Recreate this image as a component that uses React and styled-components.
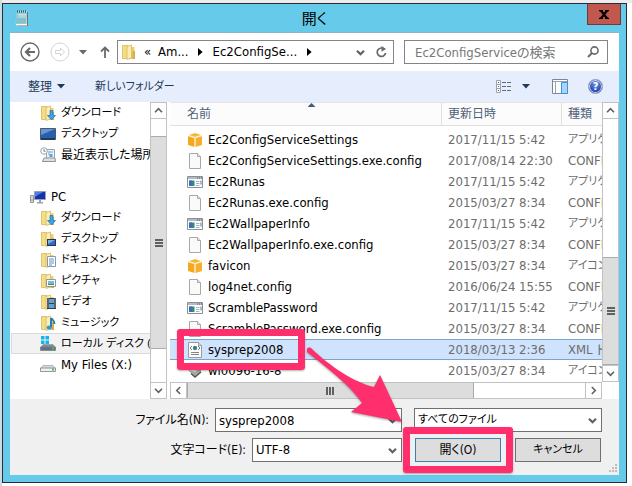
import React, { useState } from 'react';
import styled, { createGlobalStyle, css } from 'styled-components';

const GlobalStyle = createGlobalStyle`
  * {
    box-sizing: border-box;
  }

  body {
    margin: 0;
    padding: 3px 5px 3px 2px;
    background: linear-gradient(90deg, #cddce2 0 2px, transparent 2px),
      linear-gradient(#ededee 0 3px, #ffffff 3px);
    font-family: 'DejaVu Sans Condensed', 'Noto Sans', 'Noto Sans CJK JP', sans-serif;
    font-size: 13px;
    line-height: 20px;
    font-feature-settings: 'palt';
    color: #000000;
  }

  svg {
    flex: none;
  }

  button,
  input,
  select {
    font: inherit;
    font-feature-settings: inherit;
    color: inherit;
    margin: 0;
    padding: 0;
    border: none;
    border-radius: 0;
    background: none;
    outline: none;
  }
`;

// Window frame
const DialogWindow = styled.main`
  display: flex;
  flex-direction: column;
  padding: 0 7px 7px;
  border: 1px solid #2b2b33;
  background: #66cbea;
`;

const TitleBar = styled.header`
  display: grid;
  grid-template-columns: 34px 1fr 34px;
  height: 29px;
  border-bottom: 1px solid #8fb3bf;

  > svg {
    margin: 6px 0 0 4px;
  }
`;

const Title = styled.h1`
  margin: 0;
  font-size: 15px;
  font-weight: 400;
  line-height: 30px;
  text-align: center;
`;

const CloseButton = styled.button`
  display: flex;
  align-items: center;
  justify-content: center;
  height: 21px;
  margin-right: -2px;
  margin-left: 2px;
  border: 1px solid #6b3a3a;
  border-top: none;
  background: #c1584e;
`;

// Navigation row
const NavBar = styled.nav`
  display: flex;
  align-items: center;
  height: 38px;
  padding: 0 11px 0 10px;
  background: #ffffff;
`;

const NavButton = styled.button`
  display: flex;
  align-items: center;
  justify-content: center;
  width: ${(props) => props.$width}px;
  height: 24px;
  margin-left: ${(props) => props.$before || 0}px;
`;

const AddressBar = styled.div`
  display: flex;
  flex: 270 1 0;
  align-items: center;
  min-width: 0;
  height: 24px;
  margin-left: 2px;
  padding: 0 2px 0 3px;
  border: 1px solid #848484;
`;

const Crumb = styled.button`
  height: 22px;
  line-height: 20px;
  white-space: nowrap;
`;

const CrumbMark = styled.span`
  display: flex;
  justify-content: center;
  width: ${(props) => props.$width}px;
`;

const Spacer = styled.span`
  flex: 1;
`;

const SearchBox = styled.label`
  display: flex;
  flex: 184 1 0;
  align-items: center;
  min-width: 0;
  height: 24px;
  margin-left: 10px;
  padding: 0 8px 0 10px;
  border: 1px solid #848484;
`;

const SearchInput = styled.input`
  flex: 1;
  min-width: 0;
  height: 22px;

  &::placeholder {
    color: #767676;
    opacity: 1;
  }
`;

// Command row
const CommandBar = styled.div`
  display: flex;
  align-items: center;
  height: 31px;
  padding: 0 16px 0 18px;
  background: #e6eefd;
  color: #1e395b;
  font-size: 12px;
`;

const CommandButton = styled.button`
  display: flex;
  align-items: center;
  gap: 5px;
  margin-right: ${(props) => props.$after || 0}px;
  font-size: ${(props) => (props.$kana ? 11 : 12)}px;
  white-space: nowrap;
`;

const HelpBadge = styled.span`
  width: 15px;
  height: 15px;
  border: 1px solid #8d97ad;
  border-radius: 50%;
  background: radial-gradient(circle at 50% 30%, #6f95e8, #1a3fae 75%);
  box-shadow: inset 0 0 0 1px #c9d4ee;
  color: #ffffff;
  font-size: 11px;
  font-weight: 700;
  line-height: 13px;
  text-align: center;
`;

// Panes
const Panes = styled.div`
  display: grid;
  grid-template-columns: 157px minmax(0, 1fr);
  column-gap: 3px;
  background: #ffffff;
`;

const Sidebar = styled.aside`
  display: grid;
  grid-template-columns: 1fr 17px;
  height: 0;
  min-height: 100%;
`;

const Tree = styled.ul`
  min-height: 0;
  margin: 0;
  padding: 0;
  overflow: hidden;
  list-style: none;
`;

const TreeItem = styled.li`
  height: 21px;
  padding-left: 1px;
`;

const TreeButton = styled.button`
  display: flex;
  align-items: center;
  gap: 5px;
  width: 100%;
  height: 21px;
  padding-left: ${(props) => (props.$root ? 18 : 28)}px;
  border: 1px solid transparent;
  border-right: none;
  font-size: ${(props) => props.$size || 13}px;
  white-space: nowrap;

  ${(props) =>
    props.$active &&
    css`
      border-color: #dadada;
      background: #f2f2f2;
    `}
`;

const FilePane = styled.section`
  display: grid;
  grid-template-columns: minmax(0, 1fr) 17px;
  grid-template-rows: 1fr 17px;
`;

const TableWrap = styled.div`
  min-width: 0;
  padding-bottom: 1px;
  overflow: hidden;
`;

const FileTable = styled.table`
  width: 100%;
  table-layout: fixed;
  border-collapse: separate;
  border-spacing: 0;
`;

const HeadCell = styled.th`
  position: relative;
  height: 24px;
  padding: 0 0 0 ${(props) => props.$pad}px;
  border-top: 1px solid #e4e4e4;
  border-right: 1px solid #e0e0e0;
  border-bottom: 1px solid #e0e0e0;
  background: #fcfcfc;
  color: #4c607a;
  font-size: 12px;
  font-weight: 400;
  text-align: left;
  white-space: nowrap;
  overflow: hidden;

  &:last-child {
    border-right: none;
  }
`;

const SortMark = styled.span`
  position: absolute;
  top: 0;
  left: 12px;
  right: 0;
  margin: 0 auto;
  width: 8px;
  height: 4px;
  background: #44597a;
  clip-path: polygon(50% 0, 100% 100%, 0 100%);
`;

const HeadGap = styled.tr`
  height: 3px;
`;

const Cell = styled.td`
  height: 21px;
  padding: 0 0 0 ${(props) => props.$pad}px;
  border: 0 solid #7da2ce;
  border-width: ${(props) => (props.$selected ? '1px 0' : '0')};
  background: ${(props) => (props.$selected ? '#cfe3fd' : 'transparent')};
  color: #6d6d6d;
  font-size: ${(props) => (props.$kana ? 11 : 13)}px;
  line-height: 19px;
  white-space: nowrap;
  overflow: ${(props) => (props.$name ? 'visible' : 'hidden')};
`;

const FileName = styled.span`
  position: relative;
  display: flex;
  align-items: center;
  gap: 5px;
  width: max-content;
  height: 19px;
  color: #000000;
`;

const marker = css`
  position: absolute;
  z-index: 2;
  border: 7px solid #ff2f6d;
  border-radius: 3px;
  box-shadow: 0 1px 2px rgba(0, 0, 0, 0.3);
  pointer-events: none;
`;

const NameMarker = styled.span`
  ${marker}
  top: -11px;
  right: -22px;
  bottom: -11px;
  left: -10px;
`;

// Scroll bars
const ScrollBar = styled.div`
  display: flex;
  flex-direction: ${(props) => (props.$horizontal ? 'row' : 'column')};
  min-width: 0;
  min-height: 0;
  border: 1px solid #c2c2c2;
  border-width: ${(props) => (props.$horizontal ? '1px 0' : '0 1px')};
  background: #ffffff;
`;

const ScrollButton = styled.button`
  display: flex;
  flex: none;
  align-items: center;
  justify-content: center;
  width: ${(props) => (props.$horizontal ? '17px' : 'auto')};
  height: ${(props) => (props.$horizontal ? 'auto' : '17px')};
  border: 1px solid #c2c2c2;
  border-width: ${(props) => (props.$horizontal ? '0 1px' : '1px 0')};
`;

const ScrollSpace = styled.div`
  flex: ${(props) => props.$size} 1 0;
`;

const ScrollThumb = styled.div`
  display: flex;
  flex: ${(props) => props.$size} 1 0;
  align-items: center;
  justify-content: center;
  border: 1px solid #ababab;
  border-width: ${(props) => (props.$horizontal ? '0 1px' : '1px 0')};
  background: #dddddd;
`;

const ThumbGrip = styled.span`
  width: 8px;
  height: 8px;
  background: repeating-linear-gradient(
    ${(props) => (props.$horizontal ? '90deg' : '180deg')},
    #606060 0 2px,
    transparent 2px 3px
  );
`;

// Bottom area
const Footer = styled.form`
  position: relative;
  display: grid;
  grid-template-columns: minmax(0, 1fr) 188px;
  grid-auto-rows: 24px;
  gap: 6px 12px;
  padding: 9px 17px 13px 10px;
  background: #f0f0f0;
`;

const Field = styled.div`
  display: flex;
  align-items: center;
  justify-content: flex-end;
  gap: 6px;
  min-width: 0;
  font-size: 12px;

  label {
    white-space: nowrap;
  }
`;

const ControlBox = styled.div`
  display: flex;
  align-items: center;
  position: relative;
  flex: 0 1 ${(props) => props.$width}px;
  min-width: 0;
  height: 24px;
  border: 1px solid #707070;
  background: #ffffff;
  font-size: ${(props) => (props.$kana ? 11 : 13)}px;

  input,
  select {
    flex: 1;
    min-width: 0;
    height: 22px;
    padding: 0 20px 0 3px;
    appearance: none;
  }

  svg {
    position: absolute;
    right: 4px;
    pointer-events: none;
  }
`;

const Actions = styled.div`
  display: grid;
  grid-template-columns: 1fr 1fr;
  gap: 14px;
  padding: 0 1px;
`;

const ActionSlot = styled.div`
  position: relative;
  display: grid;
`;

const ActionButton = styled.button`
  border: 1px solid ${(props) => (props.$primary ? '#3c7fb1' : '#707070')};
  background: #dddddd;
  font-size: ${(props) => (props.$kana ? 11 : 12)}px;
  line-height: 22px;
`;

const ButtonMarker = styled.span`
  ${marker}
  inset: -11px -12px;
`;

const PointerArrow = styled.svg`
  position: absolute;
  z-index: 2;
  right: 98px;
  bottom: 38px;
  filter: drop-shadow(0 1px 1px rgba(0, 0, 0, 0.35));
  pointer-events: none;
`;

const ResizeGrip = styled.svg`
  position: absolute;
  right: 2px;
  bottom: 2px;
`;

const Chevron = ({ dir = 'down', bold }) => {
  const turn = { down: 0, left: 90, up: 180, right: 270 }[dir];
  return (
    <svg width="9" height="9" viewBox="0 0 9 9" aria-hidden="true">
      <path
        d="M1 2.8 4.5 6.3 8 2.8"
        fill="none"
        stroke="#606060"
        strokeWidth={bold ? 2.2 : 1.6}
        transform={`rotate(${turn} 4.5 4.5)`}
      />
    </svg>
  );
};

const Triangle = ({ color = '#1e395b' }) => (
  <svg width="8" height="5" viewBox="0 0 8 5" aria-hidden="true">
    <path d="M0 0h8L4 4.6z" fill={color} />
  </svg>
);

const CrumbArrow = () => (
  <svg width="5" height="8" viewBox="0 0 5 8" aria-hidden="true">
    <path d="M0 0v8l4.6-4z" fill="#000000" />
  </svg>
);

const CircleArrow = ({ muted, flip }) => (
  <svg width="20" height="20" viewBox="0 0 20 20" aria-hidden="true">
    <g
      fill="none"
      stroke={muted ? '#d4d4d4' : '#6a6a6a'}
      transform={flip ? 'translate(20 0) scale(-1 1)' : undefined}
    >
      <circle cx="10" cy="10" r="9" strokeWidth={muted ? 1 : 1.4} />
      {muted ? (
        <path d="M5.5 10 9.5 6v2.5h5v3h-5V14z" />
      ) : (
        <path d="M15 10H6.5M10 6 6 10l4 4" strokeWidth="2.2" />
      )}
    </g>
  </svg>
);

const NotepadIcon = () => (
  <svg width="16" height="17" viewBox="0 0 16 17" aria-hidden="true">
    <path d="M4 2h10v14H3z" fill="#7d7259" />
    <path d="M3 1.5h10v14H2z" fill="#f5fafa" />
    <path d="M3 2h10l-.5 12H1z" fill="#8fcbd6" />
    <path d="M4 4h8v4H3.5z" fill="#c6e8ee" />
    <path d="M3 6h9M2.5 8h9.5M2.5 10h9.5M2 12h10" stroke="#62aebd" strokeWidth=".6" />
    <path d="M3 1.5h10" stroke="#3e4c50" strokeWidth="2" strokeDasharray="1 1" />
  </svg>
);

const badges = {
  download: <path d="M10 5.5h3v5h2.5L11.5 15 7.5 10.5H10z" fill="#39a5e8" stroke="#1c70b8" strokeWidth=".7" />,
  desktop: (
    <>
      <rect x="7.5" y="8.5" width="8" height="6" fill="#2e6cc0" stroke="#27374e" />
      <path d="M8 9h7l-7 4z" fill="#7db0e8" />
    </>
  ),
  document: (
    <>
      <path d="M7.5 4.5h8v10h-8z" fill="#ffffff" stroke="#8a97a8" />
      <path d="M9 7h5M9 9h5M9 11h5M9 13h3" stroke="#5a93cc" />
    </>
  ),
  picture: (
    <>
      <path d="M6.5 6.5h9v7h-9z" fill="#ffffff" stroke="#8a97a8" />
      <path d="M8 8h6v2.5H8z" fill="#74bce8" />
      <path d="M8 10.5h6V12H8z" fill="#4c8f62" />
    </>
  ),
  video: (
    <>
      <path d="M7 4h9v11H7z" fill="#333a42" />
      <path d="M9 5h5v4H9zM9 10h5v4H9z" fill="#62a2d5" />
      <path d="M8 4.5v10M15 4.5v10" stroke="#e4e4e4" strokeDasharray="1 1" />
    </>
  ),
  music: (
    <>
      <path d="M11 3v9M11 3c1 2 4 2 3.5 6" fill="none" stroke="#1976c4" strokeWidth="1.8" />
      <ellipse cx="9.2" cy="12.5" rx="2.6" ry="2" fill="#2a94e4" />
    </>
  ),
};

const FolderIcon = ({ badge }) => (
  <svg width="16" height="16" viewBox="0 0 16 16" aria-hidden="true">
    <path d="M7 3h6.5v12H7z" fill="#ecd06f" />
    <path d="M11.5 7H14v8h-2.5z" fill="#d7ae48" />
    <path d="M1.5 1.5H7v13H1.5z" fill="#f6dd85" stroke="#d9b85a" strokeWidth=".8" />
    <path d="M6 2.5 10.5 1v13L6 15.5z" fill="#fbeeb4" stroke="#d9b85a" strokeWidth=".8" />
    {badges[badge]}
  </svg>
);

const DesktopIcon = () => (
  <svg width="16" height="16" viewBox="0 0 16 16" aria-hidden="true">
    <path d="M.5 2.5h15v11H.5z" fill="#2860ad" stroke="#4a5a70" />
    <path d="M1 3h14L1 9z" fill="#6795d4" />
    <path d="M1 12h14v2H1z" fill="#26384f" />
  </svg>
);

const RecentIcon = () => (
  <svg width="16" height="16" viewBox="0 0 16 16" aria-hidden="true">
    <path d="M6.5 2.5h8v9h-8z" fill="#eef3f7" stroke="#98a0a8" />
    <path d="M8 5h5M8 7h2" stroke="#6aa0ce" />
    <path d="M9.5 7h3v3h-3z" fill="#5aa2d0" />
    <path d="M2.5 14.5 4 11h11l.5 3.5z" fill="#dde1e4" stroke="#8f9499" />
    <circle cx="4" cy="4" r="3.3" fill="#ffffff" stroke="#9ba5ae" />
    <path d="M4 2v2.3h1.5" fill="none" stroke="#566270" strokeWidth=".8" />
  </svg>
);

const ComputerIcon = () => (
  <svg width="16" height="16" viewBox="0 0 16 16" aria-hidden="true">
    <path d="M.5 6.5h3v7h-3z" fill="#d3d7db" stroke="#8f969d" />
    <path d="M1.5 11h1" stroke="#3faf3f" />
    <path d="M4.5 2.5h11v8h-11z" fill="#1730b0" stroke="#9aa2ab" />
    <path d="M5 3h8L5 8z" fill="#4f7de6" />
    <path d="M9 11h2v2H9zM7 13h6v1.5H7z" fill="#9aa2ab" />
  </svg>
);

const DriveIcon = ({ system }) => (
  <svg width="16" height="16" viewBox="0 0 16 16" aria-hidden="true">
    {system && (
      <path d="M1 0h3.5v3.5H1zM5.5 0H9v3.5H5.5zM1 4.5h3.5V8H1zM5.5 4.5H9V8H5.5z" fill="#14b4ec" />
    )}
    <path
      d="M3 8.5h10l2.5 3H.5z"
      fill={system ? '#7f8c97' : '#d9dcdf'}
      stroke="#8b9299"
      strokeWidth=".6"
    />
    <path
      d="M.5 11h15v3.5H.5z"
      fill={system ? '#5f7282' : '#eef0f1'}
      stroke="#7a8188"
      strokeWidth=".8"
    />
    <path d="M12 11.5h2v2h-2z" fill="#3cc83c" />
  </svg>
);

const NetworkIcon = () => (
  <svg width="16" height="16" viewBox="0 0 16 16" aria-hidden="true">
    <circle cx="7" cy="8" r="7" fill="#4a8fd0" />
    <path d="M2 6c3-4 6-1 9-3M3 11c3-2 6 2 9-1" fill="none" stroke="#8fd08f" />
  </svg>
);

const BoxIcon = () => (
  <svg width="16" height="16" viewBox="0 0 16 16" aria-hidden="true">
    <path d="M2 3 8 1l6 2-6 2z" fill="#f7b733" />
    <path d="M1 4l6.5 2v9L1 13z" fill="#f3a81d" />
    <path d="M15 4 8.5 6v9l6.5-2z" fill="#f5af2b" />
    <path d="M1 3.7 8 5.8l7-2.1M8 5.8V15" fill="none" stroke="#fde7b5" strokeWidth=".8" />
  </svg>
);

const PageIcon = () => (
  <svg width="16" height="16" viewBox="0 0 16 16" aria-hidden="true">
    <path d="M2.5.5h8l3 3v12h-11z" fill="#fafafa" stroke="#a8a8a8" />
    <path d="M10.5.5v3h3" fill="#e6e6e6" stroke="#a8a8a8" />
  </svg>
);

const ProgramIcon = () => (
  <svg width="16" height="16" viewBox="0 0 16 16" aria-hidden="true">
    <path d="M.5 2.5h15v11H.5z" fill="#ffffff" stroke="#8a9098" />
    <path d="M1 3h14v2H1z" fill="#b4bac1" />
    <path d="M10 4h1M12 4h1M14 4h1" stroke="#4f565e" />
    <path d="M2 6.5h5.5V12H2z" fill="#35848a" />
    <path d="M2 6.5h3V12H2z" fill="#3f70ad" />
    <path d="M9 7.5h3.5M9 9.5h3.5M9 11.5h3.5" stroke="#aab3bc" />
    <path d="M14 6.5v4" stroke="#477da8" />
  </svg>
);

const XmlIcon = () => (
  <svg width="16" height="16" viewBox="0 0 16 16" aria-hidden="true">
    <path d="M1.5.5h10l3 3v12h-13z" fill="#fcfcfc" stroke="#9a9a9a" />
    <path d="M11.5.5v3h3" fill="#dddddd" stroke="#9a9a9a" />
    <path d="M5 4 3 6l2 2M11 4l2 2-2 2" fill="none" stroke="#6f7782" />
    <circle cx="8" cy="6" r="2.2" fill="#3c8f7c" />
    <path d="M7 5h1.5v1.5H7z" fill="#2c5fb0" />
    <path d="M4 10.5h8M4 12.5h8" stroke="#868686" />
  </svg>
);

const DiscIcon = () => (
  <svg width="16" height="16" viewBox="0 0 16 16" aria-hidden="true">
    <path d="M1 7 9 2l5 2v5l-6 5z" fill="#a8a8a8" />
    <path d="M1 7 9 2l5 2-6 5z" fill="#dcdcdc" />
    <path d="M4 10.5 8 14l6-5" fill="none" stroke="#555555" strokeWidth="1.5" />
  </svg>
);

const fileIcons = {
  box: BoxIcon,
  page: PageIcon,
  program: ProgramIcon,
  xml: XmlIcon,
  disc: DiscIcon,
};

const treeItems = [
  { label: 'ダウンロード', icon: <FolderIcon badge="download" />, size: 11 },
  { label: 'デスクトップ', icon: <DesktopIcon />, size: 11 },
  { label: '最近表示した場所', icon: <RecentIcon />, size: 12 },
  null,
  { label: 'PC', icon: <ComputerIcon />, root: true },
  { label: 'ダウンロード', icon: <FolderIcon badge="download" />, size: 11 },
  { label: 'デスクトップ', icon: <FolderIcon badge="desktop" />, size: 11 },
  { label: 'ドキュメント', icon: <FolderIcon badge="document" />, size: 11 },
  { label: 'ピクチャ', icon: <FolderIcon badge="picture" />, size: 11 },
  { label: 'ビデオ', icon: <FolderIcon badge="video" />, size: 11 },
  { label: 'ミュージック', icon: <FolderIcon badge="music" />, size: 11 },
  { label: 'ローカル ディスク (C:)', icon: <DriveIcon system />, size: 11, active: true },
  { label: 'My Files (X:)', icon: <DriveIcon /> },
  null,
  { label: 'ネットワーク', icon: <NetworkIcon />, root: true, size: 11 },
];

const files = [
  { name: 'Ec2ConfigServiceSettings', icon: 'box', date: '2017/11/15 5:42', type: 'アプリケーション' },
  { name: 'Ec2ConfigServiceSettings.exe.config', icon: 'page', date: '2017/08/14 22:30', type: 'CONFIG ファイル' },
  { name: 'Ec2Runas', icon: 'program', date: '2017/11/15 5:42', type: 'アプリケーション' },
  { name: 'Ec2Runas.exe.config', icon: 'page', date: '2015/03/27 8:34', type: 'CONFIG ファイル' },
  { name: 'Ec2WallpaperInfo', icon: 'program', date: '2017/11/15 5:42', type: 'アプリケーション' },
  { name: 'Ec2WallpaperInfo.exe.config', icon: 'page', date: '2015/03/27 8:34', type: 'CONFIG ファイル' },
  { name: 'favicon', icon: 'box', date: '2015/03/27 8:34', type: 'アイコン' },
  { name: 'log4net.config', icon: 'page', date: '2016/06/24 15:55', type: 'CONFIG ファイル' },
  { name: 'ScramblePassword', icon: 'program', date: '2017/11/15 5:42', type: 'アプリケーション' },
  { name: 'ScramblePassword.exe.config', icon: 'page', date: '2015/03/27 8:34', type: 'CONFIG ファイル' },
  { name: 'sysprep2008', icon: 'xml', date: '2018/03/13 2:36', type: 'XML ドキュメント' },
  { name: 'wl0096-16-8', icon: 'disc', date: '2015/03/27 8:34', type: 'アイコン' },
];

function Scroll({ horizontal, before, thumb, after }) {
  return (
    <ScrollBar $horizontal={horizontal}>
      <ScrollButton type="button" $horizontal={horizontal} aria-label="前へスクロール">
        <Chevron dir={horizontal ? 'left' : 'up'} />
      </ScrollButton>
      <ScrollSpace $size={before} />
      <ScrollThumb $size={thumb} $horizontal={horizontal}>
        <ThumbGrip $horizontal={horizontal} />
      </ScrollThumb>
      <ScrollSpace $size={after} />
      <ScrollButton type="button" $horizontal={horizontal} aria-label="次へスクロール">
        <Chevron dir={horizontal ? 'right' : 'down'} />
      </ScrollButton>
    </ScrollBar>
  );
}

function FileRow({ file, selected, onSelect }) {
  const Icon = fileIcons[file.icon];
  return (
    <tr onClick={onSelect} aria-selected={selected}>
      <Cell $name $pad={17} $selected={selected}>
        <FileName>
          <Icon />
          {file.name}
          {selected && <NameMarker />}
        </FileName>
      </Cell>
      <Cell $pad={6} $selected={selected}>{file.date}</Cell>
      <Cell $pad={6} $selected={selected} $kana={file.type.startsWith('ア')}>
        {file.type}
      </Cell>
    </tr>
  );
}

function App() {
  const [fileName, setFileName] = useState('sysprep2008');

  return (
    <>
      <GlobalStyle />
      <DialogWindow>
        <TitleBar>
          <NotepadIcon />
          <Title>開く</Title>
          <CloseButton type="button" aria-label="閉じる">
            <svg width="10" height="9" viewBox="0 0 10 9" aria-hidden="true">
              <path d="M1.5 0 8.5 9M8.5 0 1.5 9" stroke="#000000" strokeWidth="2.2" />
              <path d="M0 .6h4M6 .6h4M0 8.4h4M6 8.4h4" stroke="#000000" strokeWidth="1.2" />
            </svg>
          </CloseButton>
        </TitleBar>

        <NavBar>
          <NavButton type="button" $width={20} aria-label="戻る">
            <CircleArrow />
          </NavButton>
          <NavButton type="button" $width={20} $before={10} aria-label="進む">
            <CircleArrow muted flip />
          </NavButton>
          <NavButton type="button" $width={25} aria-label="履歴">
            <Triangle color="#6a6a6a" />
          </NavButton>
          <NavButton type="button" $width={20} aria-label="上へ">
            <svg width="10" height="12" viewBox="0 0 10 12" aria-hidden="true">
              <path d="M5 12V1.5M1 5.5l4-4 4 4" fill="none" stroke="#6a6a6a" strokeWidth="1.8" />
            </svg>
          </NavButton>
          <AddressBar>
            <FolderIcon />
            <CrumbMark $width={21}>«</CrumbMark>
            <Crumb type="button">Am...</Crumb>
            <CrumbMark $width={24}>
              <CrumbArrow />
            </CrumbMark>
            <Crumb type="button">Ec2ConfigSe...</Crumb>
            <CrumbMark $width={24}>
              <CrumbArrow />
            </CrumbMark>
            <Spacer />
            <NavButton type="button" $width={22} aria-label="以前の場所">
              <Chevron bold />
            </NavButton>
            <NavButton type="button" $width={20} aria-label="更新">
              <svg width="11" height="12" viewBox="0 0 11 12" aria-hidden="true">
                <path d="M8.5 3.3A4.2 4.2 0 1 0 9.6 7" fill="none" stroke="#6a6a6a" strokeWidth="1.7" />
                <path d="M5.5 0v5.5H6L10 3z" fill="#6a6a6a" />
              </svg>
            </NavButton>
          </AddressBar>
          <SearchBox>
            <SearchInput type="text" aria-label="検索" placeholder="Ec2ConfigServiceの検索" />
            <svg width="12" height="12" viewBox="0 0 12 12" aria-hidden="true">
              <circle cx="7.5" cy="4.5" r="3.6" fill="none" stroke="#6a6a6a" strokeWidth="1.6" />
              <path d="M5 7 1 11" stroke="#6a6a6a" strokeWidth="2" />
            </svg>
          </SearchBox>
        </NavBar>

        <CommandBar>
          <CommandButton type="button" $after={30}>
            整理
            <Triangle />
          </CommandButton>
          <CommandButton type="button" $kana>新しいフォルダー</CommandButton>
          <Spacer />
          <CommandButton type="button" $after={10} aria-label="表示">
            <svg width="16" height="13" viewBox="0 0 16 13" aria-hidden="true">
              <path d="M.5.5h4v12h-4zM.5 4.5h4M.5 8.5h4" fill="#ffffff" stroke="#9aa3b0" />
              <path d="M2 2.5h1M2 10.5h1" stroke="#445a9a" />
              <path d="M2 6.5h1" stroke="#d04030" />
              <path d="M6 2.5h4M11 2.5h4M6 6.5h4M11 6.5h4M6 10.5h4M11 10.5h4" stroke="#5d6b80" />
            </svg>
          </CommandButton>
          <CommandButton type="button" $after={22} aria-label="その他の表示">
            <Triangle />
          </CommandButton>
          <CommandButton type="button" $after={20} aria-label="プレビュー">
            <svg width="16" height="15" viewBox="0 0 16 15" aria-hidden="true">
              <path d="M.5.5h15v14H.5z" fill="#ffffff" stroke="#7c8795" />
              <path d="M1 2.5h14M3.5 3v11" stroke="#9aa3b0" />
              <path d="M9.5 3.5h6v11h-6z" fill="#a8d4f8" stroke="#3d93dc" />
            </svg>
          </CommandButton>
          <CommandButton type="button" aria-label="ヘルプ">
            <HelpBadge>?</HelpBadge>
          </CommandButton>
        </CommandBar>

        <Panes>
          <Sidebar>
            <Tree>
              {treeItems.map((item, i) => (
                <TreeItem key={i}>
                  {item && (
                    <TreeButton type="button" $root={item.root} $size={item.size} $active={item.active}>
                      {item.icon}
                      {item.label}
                    </TreeButton>
                  )}
                </TreeItem>
              ))}
            </Tree>
            <Scroll before={17} thumb={214} after={33} />
          </Sidebar>

          <FilePane>
            <TableWrap>
              <FileTable>
                <colgroup>
                  <col />
                  <col width="120" />
                  <col width="40" />
                </colgroup>
                <thead>
                  <tr>
                    <HeadCell $pad={17}>
                      名前
                      <SortMark />
                    </HeadCell>
                    <HeadCell $pad={6}>更新日時</HeadCell>
                    <HeadCell $pad={6}>種類</HeadCell>
                  </tr>
                  <HeadGap />
                </thead>
                <tbody>
                  {files.map((file) => (
                    <FileRow
                      key={file.name}
                      file={file}
                      selected={file.name === fileName}
                      onSelect={() => setFileName(file.name)}
                    />
                  ))}
                </tbody>
              </FileTable>
            </TableWrap>
            <Scroll before={139} thumb={107} after={0} />
            <Scroll horizontal before={0} thumb={286} after={112} />
          </FilePane>
        </Panes>

        <Footer onSubmit={(e) => e.preventDefault()}>
          <Field>
            <label htmlFor="file-name">ファイル名(N):</label>
            <ControlBox $width={187}>
              <input
                id="file-name"
                type="text"
                value={fileName}
                onChange={(e) => setFileName(e.target.value)}
              />
              <Chevron bold />
            </ControlBox>
          </Field>
          <ControlBox $width={188} $kana>
            <select aria-label="ファイルの種類">
              <option>すべてのファイル</option>
            </select>
            <Chevron bold />
          </ControlBox>
          <Field>
            <label htmlFor="encoding">文字コード(E):</label>
            <ControlBox $width={150}>
              <select id="encoding">
                <option>UTF-8</option>
              </select>
              <Chevron bold />
            </ControlBox>
          </Field>
          <Actions>
            <ActionSlot>
              <ActionButton type="submit" $primary>開く(O)</ActionButton>
              <ButtonMarker />
              <PointerArrow width="98" height="78" viewBox="0 0 98 78" aria-hidden="true">
                <path
                  d="M2 4C2 1 5 1 7 3C25 20 48 36 69 41L75 29L97 76L46 66L57 57C44 38 22 22 2 6Z"
                  fill="#ff2f6d"
                />
              </PointerArrow>
            </ActionSlot>
            <ActionButton type="button" $kana>キャンセル</ActionButton>
          </Actions>
          <ResizeGrip width="9" height="9" viewBox="0 0 9 9" aria-hidden="true">
            <path d="M7 0h2v2H7zM7 3h2v2H7zM4 3h2v2H4zM7 6h2v2H7zM4 6h2v2H4zM1 6h2v2H1z" fill="#bdbdbd" />
          </ResizeGrip>
        </Footer>
      </DialogWindow>
    </>
  );
}

export default App;
